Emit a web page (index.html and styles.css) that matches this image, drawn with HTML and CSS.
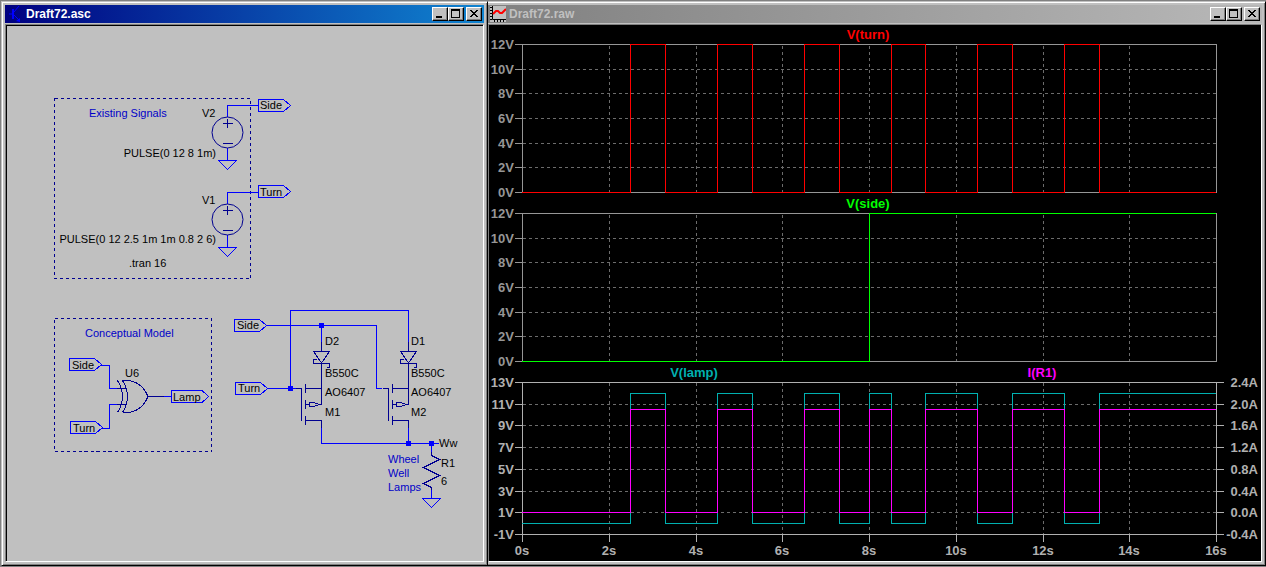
FILE: index.html
```
<!DOCTYPE html>
<html lang="en">
<head>
  <meta charset="UTF-8" />
  <meta name="viewport" content="width=device-width, initial-scale=1.0"/>
  <title>Draft72</title>
  <link rel="stylesheet" href="styles.css">
</head>
<body>

<section class="window window-schematic">
  <header class="titlebar active">
    <svg class="app-icon" width="16" height="18" viewBox="0 0 16 18">
      <path d="M2 9H6" stroke="#0000ff" stroke-width="1" fill="none"/>
      <path d="M6 4V14" stroke="#0000ff" stroke-width="2" fill="none"/>
      <path d="M7 7L12 1M7 10L12 15" stroke="#0000ff" stroke-width="1" fill="none"/>
      <path d="M13 17V13L9 16Z" fill="#0000ff"/>
    </svg>
    <h1 class="title">Draft72.asc</h1>
    <div class="controls">
      <button type="button" aria-label="Minimize"><svg width="12" height="10"><path d="M2 8H8" stroke-width="2"/></svg></button>
      <button type="button" aria-label="Maximize"><svg width="12" height="10"><path d="M1 1H10M1.5 0V9M9.5 0V9M1 8.5H10" /><path d="M1 1H10" stroke-width="2"/></svg></button>
      <button type="button" class="close" aria-label="Close"><svg width="12" height="10"><path d="M2 1L9 8M3 1L10 8M9 1L2 8M10 1L3 8"/></svg></button>
    </div>
  </header>
  <div class="client">
    <svg class="schematic" viewBox="7 26 476 535" preserveAspectRatio="xMinYMin meet">
      <defs>
        <g id="source">
          <circle r="15.5"/>
          <path d="M-5 -9.5H5M0 -14V-5M-5 10.5H5"/>
        </g>
        <path id="ground" d="M-9 0H9L0 9Z"/>
        <path id="port" d="M0 -6H25L32 0L25 6H0Z"/>
        <!-- diode and PMOS, origin on the diode anode lead -->
        <g id="leg">
          <path d="M0 0V9M-8 9.5H8L0 21ZM-8 21.5H8V25.5H5M-8 21.5V17.5H-5M0 21V62.5"/>
          <path d="M-20 46.5V79M-26 46.5H-20M-16 42V51M-16 46.5H0M-16 58V67M-16 62.5H-12M-3 62.5H0M-16 74V83M-16 78.5H0V86"/>
          <path d="M-12 60.5H-8L-2 62.5L-8 64.5H-12Z"/>
        </g>
      </defs>

      <!-- frames -->
      <rect class="frame" x="54.5" y="98.5" width="196" height="180"/>
      <rect class="frame" x="54.5" y="318.5" width="157" height="133"/>

      <!-- existing signals -->
      <g class="wire">
        <path d="M227.5 117V105.5H258M227.5 148V160M227.5 204V192.5H258M227.5 235V247"/>
        <use href="#ground" x="227.5" y="160.5"/>
        <use href="#ground" x="227.5" y="247.5"/>
        <use href="#port" x="258.5" y="105.5"/>
        <use href="#port" x="258.5" y="191.5"/>
      </g>
      <g class="part">
        <use href="#source" x="227.5" y="132.5"/>
        <use href="#source" x="227.5" y="219.5"/>
      </g>

      <!-- conceptual model -->
      <g class="wire">
        <use href="#port" x="69.5" y="364.5"/>
        <use href="#port" x="70.5" y="427.5"/>
        <path d="M101 365.5H109.5V388.5H117M101 428.5H109.5V404.5H117M164 396.5H171"/>
        <path d="M171.5 390.5H202L208.5 396.5L202 402.5H171.5Z"/>
      </g>
      <g class="part">
        <path d="M117 388.5H126M117 404.5H126M148 396.5H164"/>
        <path d="M117.5 380.5Q127.5 396.5 117.5 412.5M122.5 380.5Q132.5 396.5 122.5 412.5M122.5 380.5H127C137 381 144 387 148 396.5C144 406 137 412 127 412.5H122.5"/>
      </g>

      <!-- wheel well driver -->
      <g class="wire">
        <use href="#port" x="234.5" y="325.5"/>
        <use href="#port" x="235.5" y="388.5"/>
        <path d="M267 325.5H376.5V388.5H382M267 388.5H296M290.5 388.5V310.5H408.5V342M321.5 325.5V342"/>
        <path d="M321.5 428V443.5H439M408.5 428V443.5M431.5 443.5V456M431.5 489V498"/>
        <use href="#ground" x="431.5" y="498.5"/>
      </g>
      <g class="part">
        <use href="#leg" x="321.5" y="342"/>
        <use href="#leg" x="408.5" y="342"/>
        <path d="M431.5 452V455.5L439.5 459.5L423.5 467.5L439.5 475.5L423.5 483.5L431.5 487.5V490"/>
      </g>
      <g class="node">
        <rect x="319" y="323" width="5" height="5"/>
        <rect x="288" y="386" width="5" height="5"/>
        <rect x="406" y="441" width="5" height="5"/>
        <rect x="429" y="441" width="5" height="5"/>
      </g>

      <g class="note">
        <text x="89" y="117">Existing Signals</text>
        <text x="85" y="337">Conceptual Model</text>
        <text x="388" y="463">Wheel</text>
        <text x="388" y="477">Well</text>
        <text x="388" y="491">Lamps</text>
      </g>
      <g class="label">
        <text x="202" y="117">V2</text>
        <text x="202" y="204">V1</text>
        <text x="216" y="157" text-anchor="end">PULSE(0 12 8 1m)</text>
        <text x="216" y="243" text-anchor="end">PULSE(0 12 2.5 1m 1m 0.8 2 6)</text>
        <text x="129" y="267">.tran 16</text>
        <text x="260" y="109">Side</text>
        <text x="260" y="196">Turn</text>
        <text x="72" y="369">Side</text>
        <text x="73" y="432">Turn</text>
        <text x="173" y="401">Lamp</text>
        <text x="125" y="377">U6</text>
        <text x="237" y="329">Side</text>
        <text x="238" y="392">Turn</text>
        <text x="325" y="345">D2</text>
        <text x="325" y="377">B550C</text>
        <text x="325" y="396">AO6407</text>
        <text x="325" y="416">M1</text>
        <text x="411" y="345">D1</text>
        <text x="411" y="377">B550C</text>
        <text x="411" y="396">AO6407</text>
        <text x="411" y="416">M2</text>
        <text x="439" y="447">Ww</text>
        <text x="441" y="467">R1</text>
        <text x="441" y="485">6</text>
      </g>
    </svg>
  </div>
</section>

<section class="window window-plot">
  <header class="titlebar">
    <svg class="app-icon" width="16" height="16" viewBox="0 0 16 16">
      <rect width="16" height="16" fill="#c0c0c0"/>
      <path d="M2.5 0V13.5H16" stroke="#000" fill="none"/>
      <path d="M0 1.5H2M0 4.5H2M0 7.5H2M0 10.5H2M0 13.5H2M4.5 14V16M7.5 14V16M10.5 14V16M13.5 14V16" stroke="#000"/>
      <path d="M3 8L6 5H8L10 7H12L16 3" stroke="#ff0000" stroke-width="2" fill="none"/>
    </svg>
    <h1 class="title">Draft72.raw</h1>
    <div class="controls">
      <button type="button" aria-label="Minimize"><svg width="12" height="10"><path d="M2 8H8" stroke-width="2"/></svg></button>
      <button type="button" aria-label="Maximize"><svg width="12" height="10"><path d="M1 1H10M1.5 0V9M9.5 0V9M1 8.5H10" /><path d="M1 1H10" stroke-width="2"/></svg></button>
      <button type="button" class="close" aria-label="Close"><svg width="12" height="10"><path d="M2 1L9 8M3 1L10 8M9 1L2 8M10 1L3 8"/></svg></button>
    </div>
  </header>
  <div class="client client-plot">
    <svg class="plot" viewBox="489 25 772 536" preserveAspectRatio="xMinYMin meet">
      <!-- V(turn) -->
      <g class="pane">
        <path class="grid" d="M523 69.5H1216M523 93.5H1216M523 118.5H1216M523 143.5H1216M523 167.5H1216"/>
        <path class="grid" d="M609.5 46V192M696.5 46V192M782.5 46V192M869.5 46V192M956.5 46V192M1043.5 46V192M1129.5 46V192"/>
        <path class="axis" d="M522.5 44.5H1216.5V192.5H522.5ZM515 44.5H522M515 69.5H522M515 93.5H522M515 118.5H522M515 143.5H522M515 167.5H522M515 192.5H522"/>
        <path class="trace turn" d="M522 192.5H630.5V44.5H665.5V192.5H717.5V44.5H752.5V192.5H804.5V44.5H839.5V192.5H891.5V44.5H925.5V192.5H977.5V44.5H1012.5V192.5H1064.5V44.5H1099.5V192.5H1216"/>
        <text class="name turn" x="868" y="39">V(turn)</text>
        <g class="ylabel">
          <text x="514" y="49">12V</text>
          <text x="514" y="74">10V</text>
          <text x="514" y="98">8V</text>
          <text x="514" y="123">6V</text>
          <text x="514" y="148">4V</text>
          <text x="514" y="172">2V</text>
          <text x="514" y="197">0V</text>
        </g>
      </g>

      <!-- V(side) -->
      <g class="pane">
        <path class="grid" d="M523 238.5H1216M523 262.5H1216M523 287.5H1216M523 312.5H1216M523 336.5H1216"/>
        <path class="grid" d="M609.5 215V361M696.5 215V361M782.5 215V361M869.5 215V361M956.5 215V361M1043.5 215V361M1129.5 215V361"/>
        <path class="axis" d="M522.5 213.5H1216.5V361.5H522.5ZM515 213.5H522M515 238.5H522M515 262.5H522M515 287.5H522M515 312.5H522M515 336.5H522M515 361.5H522"/>
        <path class="trace side" d="M522 361.5H869.5V213.5H1216"/>
        <text class="name side" x="868" y="208">V(side)</text>
        <g class="ylabel">
          <text x="514" y="218">12V</text>
          <text x="514" y="243">10V</text>
          <text x="514" y="267">8V</text>
          <text x="514" y="292">6V</text>
          <text x="514" y="317">4V</text>
          <text x="514" y="341">2V</text>
          <text x="514" y="366">0V</text>
        </g>
      </g>

      <!-- V(lamp) and I(R1) -->
      <g class="pane selected">
        <path class="grid" d="M523 404.5H1216M523 425.5H1216M523 447.5H1216M523 469.5H1216M523 491.5H1216M523 512.5H1216"/>
        <path class="grid" d="M609.5 383V534M696.5 383V534M782.5 383V534M869.5 383V534M956.5 383V534M1043.5 383V534M1129.5 383V534"/>
        <path class="axis" d="M522.5 382.5H1216.5V534.5H522.5ZM515 382.5H522M515 404.5H522M515 425.5H522M515 447.5H522M515 469.5H522M515 491.5H522M515 512.5H522M515 534.5H522"/>
        <path class="axis" d="M1217 382.5H1224M1217 404.5H1224M1217 425.5H1224M1217 447.5H1224M1217 469.5H1224M1217 491.5H1224M1217 512.5H1224M1217 534.5H1224"/>
        <path class="axis" d="M522.5 535V542M609.5 535V542M696.5 535V542M782.5 535V542M869.5 535V542M956.5 535V542M1043.5 535V542M1129.5 535V542M1216.5 535V542"/>
        <path class="trace lamp" d="M522 523.5H630.5V393.5H665.5V523.5H717.5V393.5H752.5V523.5H804.5V393.5H839.5V523.5H869.5V393.5H891.5V523.5H925.5V393.5H977.5V523.5H1012.5V393.5H1064.5V523.5H1099.5V393.5H1216"/>
        <path class="trace current" d="M522 512.5H630.5V409.5H665.5V512.5H717.5V409.5H752.5V512.5H804.5V409.5H839.5V512.5H869.5V409.5H891.5V512.5H925.5V409.5H977.5V512.5H1012.5V409.5H1064.5V512.5H1099.5V409.5H1216"/>
        <text class="name lamp" x="694" y="377">V(lamp)</text>
        <text class="name current" x="1042" y="377">I(R1)</text>
        <g class="ylabel">
          <text x="514" y="387">13V</text>
          <text x="514" y="409">11V</text>
          <text x="514" y="430">9V</text>
          <text x="514" y="452">7V</text>
          <text x="514" y="474">5V</text>
          <text x="514" y="496">3V</text>
          <text x="514" y="517">1V</text>
          <text x="514" y="539">-1V</text>
          <text x="1258" y="387">2.4A</text>
          <text x="1258" y="409">2.0A</text>
          <text x="1258" y="430">1.6A</text>
          <text x="1258" y="452">1.2A</text>
          <text x="1258" y="474">0.8A</text>
          <text x="1258" y="496">0.4A</text>
          <text x="1258" y="517">0.0A</text>
          <text x="1258" y="539">-0.4A</text>
        </g>
        <g class="xlabel">
          <text x="522" y="555">0s</text>
          <text x="609" y="555">2s</text>
          <text x="696" y="555">4s</text>
          <text x="782" y="555">6s</text>
          <text x="869" y="555">8s</text>
          <text x="956" y="555">10s</text>
          <text x="1043" y="555">12s</text>
          <text x="1129" y="555">14s</text>
          <text x="1216" y="555">16s</text>
        </g>
      </g>
    </svg>
  </div>
</section>

</body>
</html>
```
FILE: styles.css
```
* {
  box-sizing: border-box;
}

body {
  margin: 0;
  padding: 1px 0 1px 1px;
  height: 100vh;
  display: grid;
  grid-template-columns: 487fr 778fr;
  grid-template-rows: minmax(0, 1fr);
  background: #808080;
  font-family: "Liberation Sans", Arial, sans-serif;
}

.window {
  display: flex;
  flex-direction: column;
  gap: 1px;
  min-width: 0;
  padding: 3px;
  background: #c0c0c0;
  border: 1px solid #c0c0c0;
  border-right-color: #000;
  border-bottom-color: #000;
  box-shadow: inset 1px 1px #fff, inset -1px -1px #808080;
}

/* the plot window is tucked under the schematic window */
.window-plot {
  padding-left: 0;
  border-left: none;
  box-shadow: inset 0 1px #fff, inset -1px -1px #808080;
}

.titlebar {
  display: flex;
  align-items: center;
  height: 18px;
  padding: 0 2px;
  background: linear-gradient(to right, #808080, #b8b8b8);
  color: #c0c0c0;
}

.titlebar.active {
  background: linear-gradient(to right, #000080, #1084d0);
  color: #fff;
}

.title {
  flex: 1;
  margin: 0 0 0 3px;
  font-size: 12px;
  line-height: 18px;
}

.controls {
  display: flex;
}

.controls button {
  width: 16px;
  height: 14px;
  padding: 1px 0 0 1px;
  display: flex;
  background: #c0c0c0;
  border: 1px solid #fff;
  border-right-color: #000;
  border-bottom-color: #000;
  box-shadow: inset -1px -1px #808080;
}

.controls .close {
  margin-left: 2px;
}

.controls path {
  fill: none;
  stroke: #000;
  shape-rendering: crispEdges;
}

.client {
  flex: 1;
  min-height: 0;
  border: 1px solid #808080;
  border-right-color: #fff;
  border-bottom-color: #fff;
  box-shadow: inset 1px 1px #000;
  padding: 1px 0 0 1px;
}

.client-plot {
  padding: 0;
  background: #000;
}

.schematic,
.plot {
  display: block;
  width: 100%;
  height: 100%;
}

.schematic path,
.schematic rect,
.plot path {
  shape-rendering: crispEdges;
}

.frame {
  fill: none;
  stroke: #000090;
  stroke-dasharray: 3 3;
}

.wire {
  fill: none;
  stroke: #0000ff;
}

.part {
  fill: none;
  stroke: #000090;
}

.node {
  fill: #0000ff;
}

.schematic text {
  font-size: 11px;
}

.note {
  fill: #0000c8;
}

.label {
  fill: #000;
}

.grid {
  fill: none;
  stroke: #6c6c6c;
  stroke-dasharray: 3 3;
}

.axis {
  fill: none;
  stroke: #969696;
}

.plot text {
  font-size: 13px;
  font-weight: bold;
}

.ylabel,
.xlabel {
  fill: #969696;
  text-anchor: end;
}

.xlabel {
  text-anchor: middle;
}

.selected .axis {
  stroke: #b0b0b0;
}

.selected .ylabel,
.selected .xlabel {
  fill: #b0b0b0;
}

.name {
  text-anchor: middle;
}

.trace {
  fill: none;
}

.trace.turn { stroke: #ff0000; }
.trace.side { stroke: #00ff00; }
.trace.lamp { stroke: #00b0b0; }
.trace.current { stroke: #ff00ff; }

.name.turn { fill: #ff0000; }
.name.side { fill: #00ff00; }
.name.lamp { fill: #00b0b0; }
.name.current { fill: #ff00ff; }
```
